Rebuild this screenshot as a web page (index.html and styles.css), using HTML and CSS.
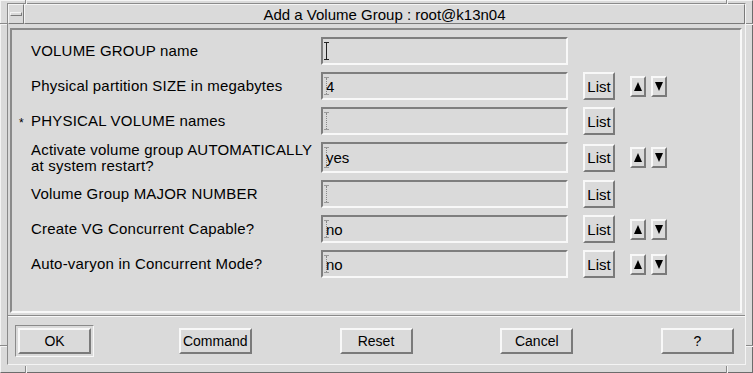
FILE: index.html
```html
<!DOCTYPE html>
<html lang="en">
<head>
    <meta charset="UTF-8">
    <title>Add a Volume Group : root@k13n04</title>
    <link rel="stylesheet" href="styles.css">
</head>
<body>
    <div class="window">
        <!-- resize corner marks of the frame -->
        <span class="tick v tl"></span>
        <span class="tick v tr"></span>
        <span class="tick v bl"></span>
        <span class="tick v br"></span>
        <span class="tick h lt"></span>
        <span class="tick h lb"></span>
        <span class="tick h rt"></span>
        <span class="tick h rb"></span>

        <div class="client">
            <div class="titlebar">
                <div class="menu-btn"><span class="menu-bar"></span></div>
                <div class="title">Add a Volume Group : root@k13n04</div>
            </div>

            <div class="panel">
                <div class="row">
                    <span class="mark"></span>
                    <span class="label">VOLUME GROUP name</span>
                    <div class="field"><span class="ibeam focus"></span></div>
                </div>
                <div class="row">
                    <span class="mark"></span>
                    <span class="label">Physical partition SIZE in megabytes</span>
                    <div class="field"><span class="ibeam"></span>4</div>
                    <button class="list">List</button>
                    <button class="arrow up"><svg width="8" height="9" viewBox="0 0 8 9"><polygon points="0,9 4,0 8,9" /></svg></button>
                    <button class="arrow down"><svg width="8" height="9" viewBox="0 0 8 9"><polygon points="0,0 8,0 4,9" /></svg></button>
                </div>
                <div class="row">
                    <span class="mark">*</span>
                    <span class="label">PHYSICAL VOLUME names</span>
                    <div class="field"><span class="ibeam"></span></div>
                    <button class="list">List</button>
                </div>
                <div class="row tall">
                    <span class="mark"></span>
                    <span class="label">Activate volume group AUTOMATICALLY<br>at system restart?</span>
                    <div class="field"><span class="ibeam"></span>yes</div>
                    <button class="list">List</button>
                    <button class="arrow up"><svg width="8" height="9" viewBox="0 0 8 9"><polygon points="0,9 4,0 8,9" /></svg></button>
                    <button class="arrow down"><svg width="8" height="9" viewBox="0 0 8 9"><polygon points="0,0 8,0 4,9" /></svg></button>
                </div>
                <div class="row">
                    <span class="mark"></span>
                    <span class="label">Volume Group MAJOR NUMBER</span>
                    <div class="field"><span class="ibeam"></span></div>
                    <button class="list">List</button>
                </div>
                <div class="row">
                    <span class="mark"></span>
                    <span class="label">Create VG Concurrent Capable?</span>
                    <div class="field"><span class="ibeam"></span>no</div>
                    <button class="list">List</button>
                    <button class="arrow up"><svg width="8" height="9" viewBox="0 0 8 9"><polygon points="0,9 4,0 8,9" /></svg></button>
                    <button class="arrow down"><svg width="8" height="9" viewBox="0 0 8 9"><polygon points="0,0 8,0 4,9" /></svg></button>
                </div>
                <div class="row">
                    <span class="mark"></span>
                    <span class="label">Auto-varyon in Concurrent Mode?</span>
                    <div class="field"><span class="ibeam"></span>no</div>
                    <button class="list">List</button>
                    <button class="arrow up"><svg width="8" height="9" viewBox="0 0 8 9"><polygon points="0,9 4,0 8,9" /></svg></button>
                    <button class="arrow down"><svg width="8" height="9" viewBox="0 0 8 9"><polygon points="0,0 8,0 4,9" /></svg></button>
                </div>
            </div>

            <div class="separator"></div>

            <div class="actions">
                <button class="btn default">OK</button>
                <button class="btn">Command</button>
                <button class="btn">Reset</button>
                <button class="btn">Cancel</button>
                <button class="btn">?</button>
            </div>
        </div>
    </div>
</body>
</html>
```

FILE: styles.css
```css
body {
    margin: 0;
    background: #dadada;
    font-family: 'Liberation Sans', Arial, sans-serif;
    color: #000;
}
.window {
    position: relative;
    width: 753px;
    height: 373px;
    box-sizing: border-box;
    background: #dadada;
    border: 1px solid;
    border-color: #f4f4f4 #6c6c6c #6c6c6c #f4f4f4;
    padding: 2px 6px 7px 6px;
}
.tick {
    position: absolute;
    background: #8a8a8a;
}
.tick.v { width: 1px; border-right: 1px solid #f4f4f4; }
.tick.h { height: 1px; border-bottom: 1px solid #f4f4f4; }
.tick.tl { left: 24px; top: -1px; height: 4px; }
.tick.tr { left: 725px; top: -1px; height: 4px; }
.tick.bl { left: 24px; bottom: -1px; height: 7px; }
.tick.br { left: 725px; bottom: -1px; height: 7px; }
.tick.lt { left: -1px; top: 22px; width: 7px; }
.tick.lb { left: -1px; top: 344px; width: 7px; }
.tick.rt { right: -1px; top: 22px; width: 7px; }
.tick.rb { right: -1px; top: 344px; width: 7px; }

.client {
    height: 100%;
    box-sizing: border-box;
    border: 1px solid;
    border-color: #8a8a8a #f4f4f4 #f4f4f4 #8a8a8a;
    display: flex;
    flex-direction: column;
}
.titlebar {
    display: flex;
    height: 20px;
}
.menu-btn, .title {
    box-sizing: border-box;
    border: 1px solid;
    border-color: #f4f4f4 #7a7a7a #7a7a7a #f4f4f4;
}
.menu-btn {
    width: 16px;
    display: flex;
    align-items: center;
    justify-content: center;
}
.menu-bar {
    width: 10px;
    height: 2px;
    border: 1px solid;
    border-color: #f4f4f4 #7a7a7a #7a7a7a #f4f4f4;
}
.title {
    flex: 1;
    text-align: center;
    font-size: 15px;
    line-height: 18px;
    padding-top: 1px;
}

.panel {
    margin: 4px 3px 0 2px;
    height: 285px;
    box-sizing: border-box;
    border: 2px solid;
    border-color: #8a8a8a #f8f8f8 #f8f8f8 #8a8a8a;
    padding: 7px 0 0 7px;
}
.row {
    display: flex;
    align-items: center;
    height: 28px;
    margin-bottom: 7px;
}
.row.tall {
    height: 31px;
}
.mark {
    width: 12px;
    font-size: 12px;
    line-height: 12px;
    padding-top: 3px;
}
.label {
    width: 290px;
    font-size: 15px;
    line-height: 16px;
    letter-spacing: 0.2px;
}
.field {
    position: relative;
    width: 247px;
    height: 100%;
    box-sizing: border-box;
    border: 2px solid;
    border-color: #7e7e7e #f8f8f8 #f8f8f8 #7e7e7e;
    padding-left: 3px;
    display: flex;
    align-items: center;
    font-size: 15px;
}
.ibeam {
    position: absolute;
    left: 1px;
    top: 3px;
    bottom: 3px;
    width: 5px;
    border-top: 1px solid #9a9a9a;
    border-bottom: 1px solid #9a9a9a;
}
.ibeam::before {
    content: '';
    position: absolute;
    left: 2px;
    top: 0;
    bottom: 0;
    border-left: 1px dotted #888;
}
.ibeam.focus {
    border-color: #222;
}
.ibeam.focus::before {
    border-left: 1px solid #222;
}
button {
    font-family: 'Liberation Sans', Arial, sans-serif;
    color: #000;
    background: #dadada;
    border: 2px solid;
    border-color: #f8f8f8 #7a7a7a #7a7a7a #f8f8f8;
    padding: 0;
    margin: 0;
}
.list {
    width: 32px;
    height: 28px;
    margin-left: 15px;
    font-size: 15px;
}
.arrow {
    width: 16px;
    height: 21px;
    display: flex;
    align-items: center;
    justify-content: center;
}
.arrow.up { margin-left: 15px; }
.arrow.down { margin-left: 5px; }
.arrow svg { display: block; }

.separator {
    margin-top: 2px;
    height: 1px;
    background: #8a8a8a;
    border-bottom: 1px solid #f8f8f8;
}
.actions {
    display: flex;
    justify-content: space-between;
    padding: 11px 11px 0 10px;
}
.btn {
    position: relative;
    width: 73px;
    height: 26px;
    font-size: 14px;
}
.btn.default::before {
    content: '';
    position: absolute;
    left: -5px;
    top: -5px;
    right: -5px;
    bottom: -5px;
    border: 1px solid;
    border-color: #8a8a8a #f8f8f8 #f8f8f8 #8a8a8a;
}
```
